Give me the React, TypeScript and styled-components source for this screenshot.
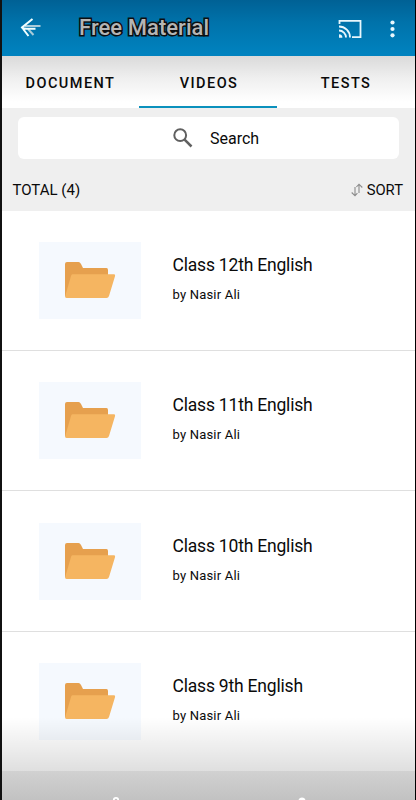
import React from "react";
import styled, { createGlobalStyle } from "styled-components";

const GlobalStyle = createGlobalStyle`
  *, *::before, *::after { box-sizing: border-box; }
  body { margin: 0; background: #000; font-family: Roboto, "Liberation Sans", sans-serif; }
`;

const Screen = styled.div`
  position: relative;
  width: 416px;
  height: 800px;
  overflow: hidden;
  display: flex;
  flex-direction: column;
  background: #fff;
  border-left: 2px solid #111;
  border-right: 1px solid #000;
  color: #0a0a0a;
`;

const TopBar = styled.header`
  flex: none;
  height: 56px;
  display: flex;
  align-items: center;
  padding: 0 20px 0 18px;
  background: linear-gradient(#006195 0, #0072aa 22px, #0082bf 54px);
`;

const IconButton = styled.button`
  display: flex;
  flex: none;
  padding: 0;
  border: 0;
  background: none;
  color: #e8f7fd;
`;

const Title = styled.h1`
  flex: 1;
  margin: -1px 0 0 37px;
  font-size: 22px;
  line-height: 28px;
  font-weight: 500;
  letter-spacing: 0.05px;
  color: #b5b5b5;
  -webkit-text-stroke: 3px #0c0e10;
  paint-order: stroke fill;
`;

const Actions = styled.div`
  display: flex;
  align-items: center;
  gap: 28px;
  margin-top: 2px;
`;

const Tabs = styled.nav`
  flex: none;
  height: 52px;
  display: grid;
  grid-template-columns: 137px 138px 1fr;
  background: linear-gradient(#dadada 0, #efefef 22px, #fff 46px);
`;

const Tab = styled.button<{ $active?: boolean }>`
  border: 0;
  border-bottom: 2px solid ${(p) => (p.$active ? "#0b91bd" : "transparent")};
  background: none;
  padding: 5px 0 0 ${(p) => (p.$active ? "2px" : "0")};
  font: 500 14.5px/20px Roboto, sans-serif;
  letter-spacing: 1.45px;
  color: #0a0a0a;
`;

const Filters = styled.section`
  flex: none;
  height: 103px;
  padding: 9px 16px 0;
  background: #efefef;
`;

const SearchBox = styled.div`
  height: 42px;
  border-radius: 6px;
  background: #fff;
  display: flex;
  align-items: center;
  padding-left: 155px;
  gap: 17px;
  font-size: 16px;
`;

const Summary = styled.div`
  display: flex;
  justify-content: space-between;
  align-items: center;
  height: 20px;
  margin: 21px -4px 0 -5.5px;
  font-size: 15px;
`;

const Sort = styled.span`
  display: flex;
  align-items: center;
  gap: 4px;
  font-size: 14.8px;
`;

const List = styled.main`
  flex: none;
  height: 560px;
  overflow: hidden;
`;

const Row = styled.article`
  height: 140.2px;
  display: flex;
  padding: 31.2px 0 0 37px;
  border-bottom: 1px solid #dfdfdf;
`;

const Thumb = styled.div`
  width: 102px;
  height: 77px;
  background: #f5f9fe;
  padding: 19px 0 0 24.5px;
`;

const Info = styled.div`
  padding: 11.1px 0 0 31.5px;
`;

const Name = styled.h2`
  margin: 0;
  font-size: 17.5px;
  line-height: 24px;
  font-weight: 400;
  letter-spacing: -0.2px;
`;

const Author = styled.p`
  margin: 10px 0 0;
  font-size: 13px;
  line-height: 16px;
  letter-spacing: 0.2px;
`;

const BottomShade = styled.div`
  position: absolute;
  inset: auto 0 29px 0;
  height: 54px;
  background: linear-gradient(rgba(0, 0, 0, 0), rgba(0, 0, 0, 0.125));
  pointer-events: none;
`;

const SystemBar = styled.footer`
  flex: none;
  height: 29px;
  background: linear-gradient(#d1d1d1, #c2c2c2);
`;

const BackIcon = () => (
  <svg width="22" height="20" viewBox="0 0 22 20" fill="none" strokeWidth="2">
    <path d="M20.5 8H5M13.5 17L8 11" stroke="#a9cbd9" />
    <path d="M12.5 1L2 9.5L8.5 18M2 10L6 10.8H15.5" stroke="#f1ffff" />
  </svg>
);

const CastIcon = () => (
  <svg width="24" height="20" viewBox="0 0 24 20" fill="none" stroke="currentColor" strokeWidth="1.8">
    <path d="M1.5 5V1.8H22.5V18.2H14" />
    <path d="M1 7.5A11 11 0 0 1 12 18.5M1 11.5A7 7 0 0 1 8 18.5" />
    <path d="M1 15.2A3.5 3.5 0 0 1 4.4 18.8H1Z" fill="currentColor" stroke="none" />
  </svg>
);

const MoreIcon = () => (
  <svg width="5" height="18" viewBox="0 0 5 18" fill="currentColor">
    <circle cx="2.5" cy="2.5" r="2.1" />
    <circle cx="2.5" cy="9" r="2.1" />
    <circle cx="2.5" cy="15.3" r="2.1" />
  </svg>
);

const SearchIcon = () => (
  <svg width="20" height="20" viewBox="0 0 20 20" fill="none" stroke="#606060">
    <circle cx="7.2" cy="7.2" r="5.9" strokeWidth="2" />
    <path d="M11.6 11.6L18.5 18.5" strokeWidth="2.5" />
  </svg>
);

const SortIcon = () => (
  <svg width="12" height="14" viewBox="0 0 12 14" fill="none" stroke="#8b8b8b" strokeWidth="1.1">
    <path d="M4 4V12.7M.7 9.5L4 12.8L6.4 10.2M8 10V1.2M5.4 4L8 1.2L11.3 4.5" />
  </svg>
);

const FolderIcon = () => (
  <svg width="52" height="38" viewBox="0 0 52 38">
    <path d="M1 35V3Q1 1 3 1H14.5Q16 1 17 3L19 7H42.5Q44 7 44 9V30L36 36H2Z" fill="#e6a04e" />
    <path d="M8.3 13.2H50Q51.7 13.2 51 15.2L45 35Q44.4 37 42.5 37H2.6Q.7 37 1.2 35L7 15Q7.4 13.2 8.3 13.2Z" fill="#f5b561" />
  </svg>
);

const NavGlyphs = styled.svg`
  display: block;
  width: 100%;
  height: 29px;
`;

const classes = ["Class 12th English", "Class 11th English", "Class 10th English", "Class 9th English"];

export default function App() {
  return (
    <>
      <GlobalStyle />
      <Screen>
        <TopBar>
          <IconButton aria-label="Back"><BackIcon /></IconButton>
          <Title>Free Material</Title>
          <Actions>
            <IconButton aria-label="Cast"><CastIcon /></IconButton>
            <IconButton aria-label="More"><MoreIcon /></IconButton>
          </Actions>
        </TopBar>
        <Tabs>
          <Tab>DOCUMENT</Tab>
          <Tab $active>VIDEOS</Tab>
          <Tab>TESTS</Tab>
        </Tabs>
        <Filters>
          <SearchBox><SearchIcon />Search</SearchBox>
          <Summary>
            <span>TOTAL (4)</span>
            <Sort><SortIcon />SORT</Sort>
          </Summary>
        </Filters>
        <List>
          {classes.map((name) => (
            <Row key={name}>
              <Thumb><FolderIcon /></Thumb>
              <Info>
                <Name>{name}</Name>
                <Author>by Nasir Ali</Author>
              </Info>
            </Row>
          ))}
        </List>
        <SystemBar>
          <NavGlyphs viewBox="0 0 413 29">
            <circle cx="114" cy="29" r="2.2" fill="none" stroke="#fff" strokeWidth="1.8" />
            <circle cx="300" cy="30" r="3.5" fill="#fff" />
          </NavGlyphs>
        </SystemBar>
        <BottomShade />
      </Screen>
    </>
  );
}
